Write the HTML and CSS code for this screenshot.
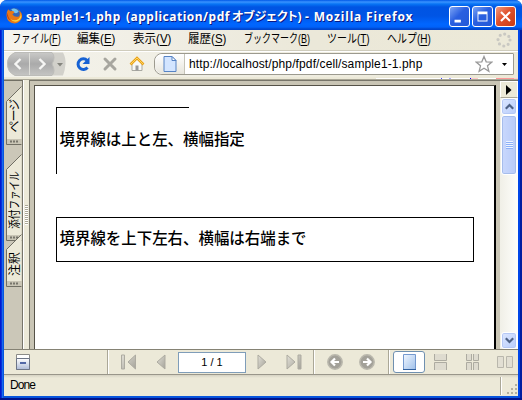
FILE: index.html
```html
<!DOCTYPE html>
<html lang="ja">
<head>
<meta charset="utf-8">
<title>sample1-1.php</title>
<link rel="stylesheet" href="styles.css">
</head>
<body>
<div class="window">
  <header class="titlebar">
    <svg class="logo" width="17" height="17" viewBox="0 0 16 16"><circle cx="8" cy="8" r="7" fill="#3567b5"/><path d="M5 2Q9 0 12 4Q10 7 7 5Z" fill="#75c4ed"/><path d="M2 2L4 4Q7 3 8 5L6 7Q8 10 12 9Q14 7 12 3Q16 6 15 10Q13 15 8 15.500Q1 15 .5 8Q.5 4 2 2Z" fill="#e87816"/><path d="M13 5Q15 8 12 11Q8 14 4 11Q8 16 13 12Q16 9 13 5Z" fill="#ffd43b"/><path d="M2 5Q1 10 5 13Q2 12 1 8Z" fill="#b83313"/></svg>
    <h1 class="title"><span class="t1">sample1-1.php</span><span class="t2">(application/pdf</span><span class="t3">オブジェクト)</span><span class="t4">- Mozilla Firefox</span></h1>
    <div class="controls">
      <svg class="ctl" viewBox="0 0 21 21"><path d="M5 14h7v3H5z" fill="#fff"/></svg>
      <svg class="ctl" viewBox="0 0 21 21"><path d="M5 5h11v11H5zM6 8v7h9V8z" fill="#fff" fill-rule="evenodd"/></svg>
      <svg class="ctl close" viewBox="0 0 21 21"><path d="M5.500 5.500l10 10M15.500 5.500l-10 10" stroke="#fff" stroke-width="2.300"/></svg>
    </div>
  </header>
  <nav class="menubar">
    <span class="m1">ファイル(<u>F</u>)</span><span class="m2">編集(<u>E</u>)</span><span class="m3">表示(<u>V</u>)</span><span class="m4">履歴(<u>S</u>)</span><span class="m5">ブックマーク(<u>B</u>)</span><span class="m6">ツール(<u>T</u>)</span><span class="m7">ヘルプ(<u>H</u>)</span>
    <svg class="throbber" width="16" height="16" viewBox="0 0 16 16"><circle cx="8" cy="8" r="6" fill="none" stroke="#c9c8c2" stroke-width="3.200" stroke-linecap="round" stroke-dasharray="0 4.712"/></svg>
  </nav>
  <div class="toolbar">
    <svg class="history" width="60" height="24" viewBox="0 0 60 24">
      <defs><linearGradient id="hg" x2="0" y2="1"><stop stop-color="#c9c9c7"/><stop offset=".5" stop-color="#aaa"/><stop offset="1" stop-color="#c5c5c3"/></linearGradient></defs>
      <path d="M8 .5H56Q59 6 58.500 12Q58 19 56 23.500H8Q0 20 .5 11Q.5 4 8 .5Z" fill="#d2d1cb"/>
      <path d="M8 .5H45Q49 5 45 12Q49 19 45 23.500H8Q0 20 .5 11Q.5 4 8 .5Z" fill="url(#hg)" stroke="#bcbcb8"/>
      <path d="M22.500 1v22" stroke="#deded9"/>
      <path d="M13.500 7L8.500 12L13.500 17M32.500 7L37.500 12L32.500 17" fill="none" stroke="#f6f6f4" stroke-width="2.400"/>
      <path d="M50 11h6l-3 3.500z" fill="#85857e"/>
    </svg>
    <svg class="reload" width="16" height="16" viewBox="0 0 16 16"><path d="M12.200 4.500A5.300 5.300 0 1 0 12.500 11.500" fill="none" stroke="#1762d4" stroke-width="3"/><path d="M14.500 1v7H7.500z" fill="#1762d4"/></svg>
    <svg class="stop" width="16" height="16" viewBox="0 0 16 16"><path d="M3 3l10 10M13 3L3 13" stroke="#a7a69f" stroke-width="3" stroke-linecap="round"/></svg>
    <svg class="home" width="16" height="16" viewBox="0 0 16 16"><path d="M3 8v6.500h10V8L8 3z" fill="#f8f8f5" stroke="#a9a9a2"/><path d="M6.500 9.500h3v5h-3z" fill="#999"/><path d="M1.500 8.500L8 2l6.500 6.500" fill="none" stroke="#e9a21a" stroke-width="2.600"/><path d="M2 8L8 2l6 6" fill="none" stroke="#ffd45b"/></svg>
    <div class="location">
      <div class="identity"><svg width="14" height="16" viewBox="0 0 14 16"><path d="M1 .5h8l4 4v11H1z" fill="#d3e5ff" stroke="#5683c4"/><path d="M9 .5v4h4z" fill="#fff" stroke="#5683c4"/></svg></div>
      <span class="url">http://localhost/php/fpdf/cell/sample1-1.php</span>
      <svg class="star" width="18" height="18" viewBox="0 0 18 18"><path d="M9 1.500l2.200 5.300 5.600.3-4.300 3.700 1.400 5.600L9 13.300l-4.900 3.100 1.400-5.600L1.200 7.100l5.600-.3z" fill="#fff" stroke="#999" stroke-width="1.300"/></svg>
      <svg class="drop" width="5" height="3" viewBox="0 0 5 3"><path d="M0 0h5L2.500 3z"/></svg>
    </div>
  </div>
  <div class="strip"><i></i></div>
  <main class="viewer">
    <aside class="tabs">
      <div class="tab tab-pages"><svg width="16" height="59" viewBox="0 0 16 59"><path d="M15.500.5L.5 15.500V58.500h15z" fill="#ece9d8"/><path d="M15.500.5L.5 15.500V58.500h15" fill="none" stroke="#716f64"/><path d="M1 53h15v5H1z" fill="#c9c5b5"/><path d="M4 55.500h9" stroke="#77756b" stroke-width="2" stroke-dasharray="2 1"/></svg><span>ページ</span></div>
      <div class="tab tab-files"><svg width="16" height="87" viewBox="0 0 16 87"><path d="M15.500.5L.5 15.500V86.500h15z" fill="#ece9d8"/><path d="M15.500.5L.5 15.500V86.500h15" fill="none" stroke="#716f64"/><path d="M1 81h15v5H1z" fill="#c9c5b5"/><path d="M4 83.500h9" stroke="#77756b" stroke-width="2" stroke-dasharray="2 1"/></svg><span>添付ファイル</span></div>
      <div class="tab tab-notes"><svg width="16" height="53" viewBox="0 0 16 53"><path d="M15.500.5L.5 15.500V52.500h15z" fill="#ece9d8"/><path d="M15.500.5L.5 15.500V52.500h15" fill="none" stroke="#716f64"/><path d="M1 47h15v5H1z" fill="#c9c5b5"/><path d="M4 49.500h9" stroke="#77756b" stroke-width="2" stroke-dasharray="2 1"/></svg><span>注釈</span></div>
    </aside>
    <div class="splitter"><i></i></div>
    <section class="canvas">
      <article class="page">
        <p class="cell partial">境界線は上と左、横幅指定</p>
        <p class="cell full">境界線を上下左右、横幅は右端まで</p>
      </article>
    </section>
    <div class="scroll">
      <div class="flyout"><svg width="6" height="10" viewBox="0 0 6 10"><path d="M0 0l5.500 5L0 10z"/></svg></div>
      <div class="sbtn"><svg width="9" height="7" viewBox="0 0 9 7"><path d="M.8 5.700L4.500 2l3.700 3.700" fill="none" stroke="#4d6185" stroke-width="2.200"/></svg></div>
      <div class="thumb"><i></i></div>
      <div class="track"></div>
      <div class="sbtn"><svg width="9" height="7" viewBox="0 0 9 7"><path d="M.8 1.300L4.500 5l3.700-3.700" fill="none" stroke="#4d6185" stroke-width="2.200"/></svg></div>
    </div>
  </main>
  <div class="pdfbar">
    <div class="group g1"><svg width="14" height="16" viewBox="0 0 14 16"><defs><linearGradient id="bg" x2="0" y2="1"><stop stop-color="#fff"/><stop offset="1" stop-color="#aebbd8"/></linearGradient></defs><path d="M.5.5h13v15H.5z" fill="#fff" stroke="#8b8b87"/><path d="M.5 4.500h13v11H.5z" fill="url(#bg)" stroke="#6d7586"/><path d="M4 8h6v2H4z" fill="#5267a6"/></svg></div>
    <div class="group g2">
      <svg width="16" height="16" viewBox="0 0 16 16"><defs><linearGradient id="ng" x2="1" y2="1"><stop stop-color="#e2e0d7"/><stop offset="1" stop-color="#a4a299"/></linearGradient></defs><path d="M.5 1h3v14h-3zM14.500 1v14L7 8z" fill="url(#ng)" stroke="#adaba1"/></svg>
      <svg class="prev" width="10" height="16" viewBox="0 0 10 16"><path d="M9 1v14L1 8z" fill="url(#ng)" stroke="#adaba1"/></svg>
      <div class="pageno">1 / 1</div>
      <svg class="next" width="10" height="16" viewBox="0 0 10 16"><path d="M1 1v14l8-7z" fill="url(#ng)" stroke="#adaba1"/></svg>
      <svg class="last" width="16" height="16" viewBox="0 0 16 16"><path d="M12 1h3v14h-3zM1 1v14l8-7z" fill="url(#ng)" stroke="#adaba1"/></svg>
    </div>
    <div class="group g3">
      <svg width="16" height="16" viewBox="0 0 16 16"><circle cx="8" cy="8" r="7.200" fill="#a3a199" stroke="#bab8ad" stroke-width="1.500"/><path d="M12 8H5M8 4.500L4.500 8 8 11.500" fill="none" stroke="#fff" stroke-width="2.200"/></svg>
      <svg width="16" height="16" viewBox="0 0 16 16"><circle cx="8" cy="8" r="7.200" fill="#a3a199" stroke="#bab8ad" stroke-width="1.500"/><path d="M4 8h7M8 4.500L11.500 8 8 11.500" fill="none" stroke="#fff" stroke-width="2.200"/></svg>
    </div>
    <div class="group g4">
      <div class="mode"><svg width="13" height="16" viewBox="0 0 13 16"><defs><linearGradient id="pg" x2="1" y2="1"><stop stop-color="#f1f7ff"/><stop offset="1" stop-color="#9fc0ea"/></linearGradient></defs><path d="M.5.5h12v15H.5z" fill="url(#pg)" stroke="#7499cf"/><path d="M0 15.500h13" stroke="#30609f"/></svg></div>
      <svg width="13" height="16" viewBox="0 0 13 16"><path d="M.5 0v6.500h12V0M.5 16V8.500h12V16" fill="#dedbcf" stroke="#adaba1"/></svg>
      <svg width="13" height="16" viewBox="0 0 13 16"><path d="M.5 0v6.500h5V0M7.500 0v6.500h5V0M.5 16V8.500h5V16M7.500 16V8.500h5V16" fill="#dedbcf" stroke="#adaba1"/></svg>
      <svg width="16" height="12" viewBox="0 0 16 12"><path d="M.5.5h6v11h-6zM9.500.5h6v11h-6z" fill="#e2dfd3" stroke="#b9b7ac"/></svg>
    </div>
  </div>
  <footer class="status"><span>Done</span><div class="grip"><svg width="11" height="11" viewBox="0 0 11 11"><path d="M8 0h2v2H8zM4 4h2v2H4zM8 4h2v2H8zM0 8h2v2H0zM4 8h2v2H4zM8 8h2v2H8z" fill="#b4b09f"/></svg></div></footer>
</div>
</body>
</html>
```
FILE: styles.css
```css
* { box-sizing: border-box; }
body { margin: 0; background: #fff; font: 12px "Liberation Sans", "Noto Sans CJK JP", sans-serif; color: #000; }
svg { display: block; flex: none; }
i { display: block; }
.window { width: 522px; height: 400px; display: flex; flex-direction: column; padding: 0 4px 4px; overflow: hidden; border-radius: 7px 7px 0 0; background: linear-gradient(90deg, #0019cf 0 1px, #0831d9 1px 2px, #166aee 2px 3px, #0855dd 3px 518px, #0046e8 518px 520px, #001ea0 520px); box-shadow: inset 0 -2px #00138c; }

.titlebar { height: 30px; flex: none; margin: 0 -4px; padding: 0 6px; display: flex; align-items: center; background: linear-gradient(#0058e6 0, #3a93ff 2px, #0875f5 4px, #0054e3 7px, #0055e5 16px, #0066ff 24px, #0062fa 27px, #0045cc 29px); }
.logo { margin-top: 1px; }
.title { margin: 3px 0 0 3px; height: 20px; display: flex; flex: 1; color: #fff; font: bold 12px/20px "Noto Sans", "Noto Sans CJK JP", sans-serif; text-shadow: 1px 1px #0a1883; white-space: nowrap; }
.title span { flex: none; }
.t1 { width: 100px; letter-spacing: .6px; }
.t2 { width: 106px; letter-spacing: .5px; }
.t3 { width: 73px; font-feature-settings: "palt"; }
.t4 { letter-spacing: .85px; }
.controls { display: flex; gap: 2px; margin-top: 3px; }
.ctl { width: 21px; height: 21px; border: 1px solid #fff; border-radius: 3px; background: linear-gradient(135deg, #7da5f5, #2a5fe0 45%, #2459d8); }
.close { background: linear-gradient(135deg, #f09a80, #e0512c 45%, #c93a14); }

.menubar { height: 20px; flex: none; padding: 0 6px 2px 8px; display: flex; align-items: center; background: linear-gradient(90deg, #f5f4ef, #ebe8d9 60%, #ece9d8); line-height: 18px; white-space: nowrap; }
.menubar span { flex: none; transform-origin: 0 50%; }
.menubar u { text-underline-offset: 2px; }
.m1 { width: 65px; transform: scaleX(.77); }
.m2, .m3, .m4 { width: 55.5px; transform: scaleX(.96); }
.m5 { width: 83px; transform: scaleX(.75); }
.m6 { width: 60px; transform: scaleX(.83); }
.m7 { width: 60px; transform: scaleX(.83); }
.throbber { margin-left: auto; margin-top: 2px; }

.toolbar { height: 27px; flex: none; border-top: 1px solid #cfccbc; box-shadow: inset 0 1px #fff; padding: 0 4px 0 3px; display: flex; align-items: center; background: linear-gradient(90deg, #f3f2eb, #ece9d8); }
.reload { margin-left: 8px; }
.stop, .home { margin-left: 11px; }
.location { margin-left: 9px; flex: 1; height: 22px; display: flex; align-items: center; background: #fff; border: 1px solid #9c9a8f; border-radius: 8px 1px 1px 8px; }
.identity { width: 30px; height: 20px; display: grid; place-items: center; background: linear-gradient(#fff, #e7e5dc); border-right: 1px solid #c5c3b8; border-radius: 8px 0 0 8px; }
.url { margin-left: 4px; letter-spacing: .12px; }
.star { margin-left: auto; }
.drop { margin: 0 6px 0 9px; }
.strip { height: 3px; flex: none; padding-top: 1px; background: #ece9d8; border-bottom: 1px solid #aaa797; }
.strip i { margin-left: 372px; width: 142px; height: 1px; background: linear-gradient(90deg, #fff 65px, #44f 65px 66px, #fff 66px 73px, #aaf 73px 75px, #fff 75px 94px, #00f 94px 95px, #fcc 95px 102px, #fff 102px 120px, #f99 120px 138px, #fcc 138px); }

.viewer { height: 269px; flex: none; display: flex; }
.tabs { width: 18px; padding: 5px 0 0 2px; display: flex; flex-direction: column; background: #cbc7b8; border-top: 1px solid #716f64; }
.tab { width: 16px; position: relative; flex: none; }
.tab span { position: absolute; left: 2px; bottom: 12px; writing-mode: vertical-rl; text-orientation: sideways; line-height: 15px; white-space: nowrap; transform: rotate(180deg); }
.tab-pages span { font-feature-settings: "palt"; letter-spacing: -1px; }
.tab-files { margin-top: 9px; }
.tab-files span { bottom: 5px; transform: rotate(180deg) scaleY(.8); }
.tab-notes { margin-top: -7px; padding-bottom: 1px; }
.splitter { width: 7px; background: #ece9d8; border-left: 1px solid #77756a; padding: 125px 0 0 2px; box-shadow: inset 1px 0 #fff; }
.splitter i { width: 3px; height: 20px; background: repeating-linear-gradient(#aaa797 0 1px, #fff 1px 2px); }
.canvas { width: 471px; border-top: 1px solid #77756a; border-left: 1px solid #77756a; background: #c9c5b5; padding: 4px 4px 0; }
.page { height: 264px; border: 1px solid #555248; border-width: 1px 2px 0 1px; border-right-color: #000; background: #fff; padding: 21px 0 0 21px; }
.cell { margin: 0; padding: 0 0 5px 2.500px; display: flex; align-items: center; font: 500 15.450px/20px "Noto Sans CJK JP", sans-serif; }
.partial { height: 67px; border-left: 1px solid #000; background: linear-gradient(#000, #000) 0 0 / 132px 1px no-repeat; }
.full { width: 418px; height: 45px; margin-top: 43px; border: 1px solid #000; }
.scroll { width: 18px; display: flex; flex-direction: column; padding: 0 1px; background: linear-gradient(90deg, #f0efe7, #fefefb); border-top: 1px solid #77756a; }
.flyout { height: 17px; flex: none; margin: 0 -1px; padding-right: 1px; display: grid; place-items: center; background: #ece9d8; border: 1px solid #fff; border-bottom-color: #aaa797; }
.sbtn { height: 17px; flex: none; display: grid; place-items: center; border: 1px solid #fff; border-radius: 3px; background: linear-gradient(135deg, #dbe6ff, #b9cdfb); box-shadow: inset 0 0 0 1px #b5c8f5; }
.thumb { height: 60px; flex: none; display: grid; place-items: center; border: 1px solid #fff; border-radius: 3px; background: linear-gradient(90deg, #c9d8fd, #b8cbf8); box-shadow: inset 0 0 0 1px #a6bdec; }
.thumb i { width: 7px; height: 8px; background: repeating-linear-gradient(#eef4ff 0 1px, #8cb0f8 1px 2px); }
.track { flex: 1; }

.pdfbar { height: 26px; flex: none; display: flex; background: #ece9d8; border-top: 1px solid #858274; border-bottom: 1px solid #99968a; }
.group { height: 24px; display: flex; align-items: center; border-right: 1px solid #aaa797; box-shadow: 1px 0 #fff; }
.g1 { width: 104px; padding-left: 12px; }
.g2 { width: 206px; padding-left: 13px; }
.prev { margin-left: 19px; }
.pageno { width: 68px; height: 21px; margin-left: 12px; border: 1px solid #7f9db9; background: #fff; font-size: 11px; line-height: 19px; text-align: center; }
.next { margin-left: 11px; }
.last { margin-left: 19px; }
.g3 { width: 75px; padding-left: 13px; gap: 16px; }
.g4 { flex: 1; border: 0; box-shadow: none; padding-left: 4px; }
.g4 svg { margin-left: 19px; }
.g4 > svg:nth-child(2) { margin-left: 9px; }
.g4 > svg:last-child { margin-left: 18px; }
.mode { width: 32px; height: 22px; display: grid; place-items: center; background: #fff; border: 1px solid #6f90b0; border-radius: 3px; }
.g4 .mode svg { margin: 0; }
.status { flex: 1; min-height: 0; padding-left: 6px; display: flex; align-items: center; justify-content: space-between; background: linear-gradient(#d5d2c3, #ece9d8 3px, #ece9d8); }
.status span { letter-spacing: -.9px; padding-bottom: 1px; }
.grip { width: 18px; height: 18px; display: flex; align-items: flex-end; justify-content: flex-end; border-left: 1px solid #aaa797; box-shadow: inset 1px 0 #fff; }
```
